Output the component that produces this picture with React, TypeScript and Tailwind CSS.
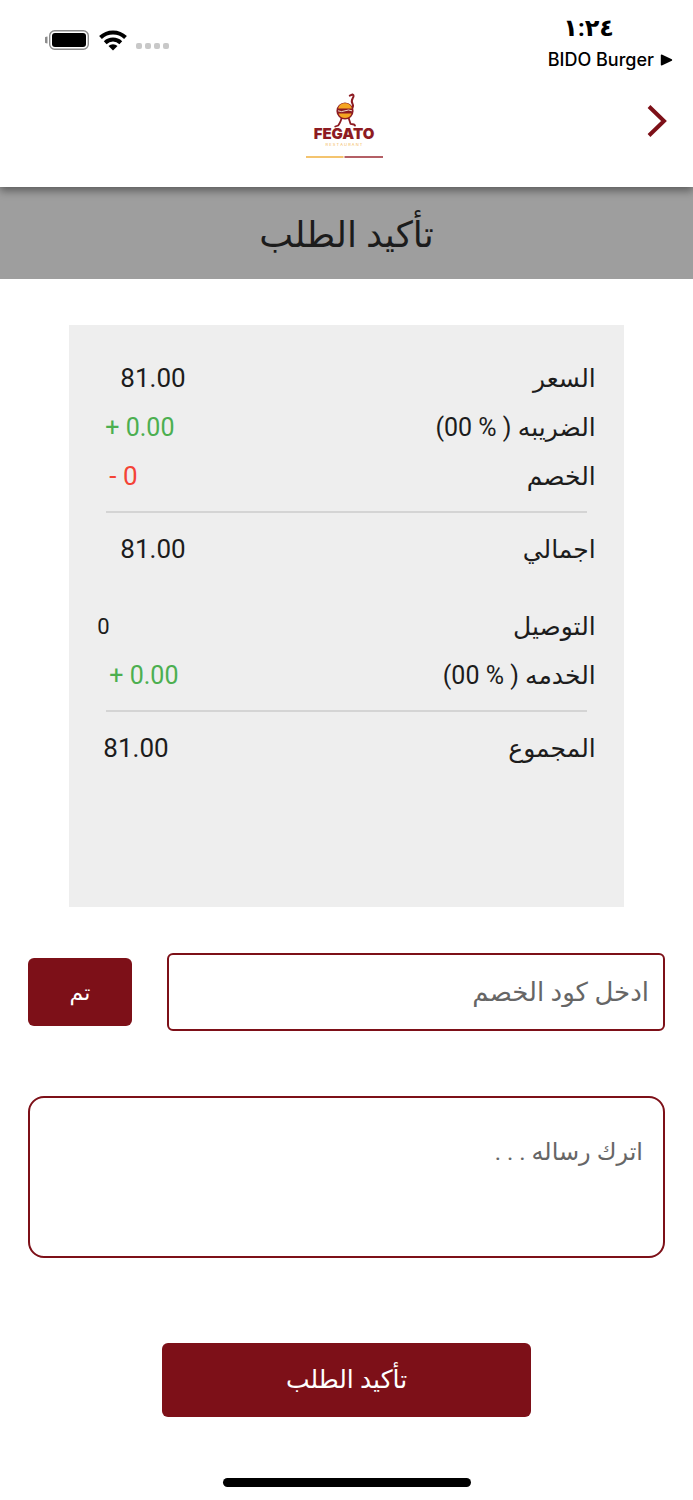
import React, { useState } from 'react';

interface SummaryRow {
  label: string;
  value: string;
  valueClass: string;
}

const SUBTOTAL_ROWS: SummaryRow[] = [
  { label: 'السعر', value: '81.00', valueClass: 'pl-[51px] text-[26px]' },
  { label: 'الضريبه ( % 00)', value: '+ 0.00', valueClass: 'pl-9 text-[25px] text-[#4caf50]' },
  { label: 'الخصم', value: '- 0', valueClass: 'pl-10 text-[26px] text-[#f44336]' },
];

const TOTAL_ROW: SummaryRow[] = [
  { label: 'اجمالي', value: '81.00', valueClass: 'pl-[51px] text-[26px]' },
];

const DELIVERY_ROWS: SummaryRow[] = [
  { label: 'التوصيل', value: '0', valueClass: 'pl-7 text-[22px]' },
  { label: 'الخدمه ( % 00)', value: '+ 0.00', valueClass: 'pl-10 text-[25px] text-[#4caf50]' },
];

const GRAND_TOTAL_ROW: SummaryRow[] = [
  { label: 'المجموع', value: '81.00', valueClass: 'pl-[34px] text-[26px]' },
];

const SummaryList: React.FC<{ rows: SummaryRow[] }> = ({ rows }) => (
  <dl>
    {rows.map((row) => (
      <div key={row.label} className="flex h-[49px] items-center justify-between pr-7">
        <dt className="text-[25px]">{row.label}</dt>
        <dd dir="ltr" className={row.valueClass}>{row.value}</dd>
      </div>
    ))}
  </dl>
);

const Divider: React.FC = () => <hr className="mx-[37px] mt-[10px] mb-3 border-t-2 border-[#d4d4d4]" />;

const StatusBar: React.FC = () => (
  <div dir="ltr" className="flex items-start justify-between pt-3 pr-5 pl-[45px]">
    <div className="flex h-14 items-center gap-[9px]">
      <svg width="45" height="22" viewBox="0 0 45 22" aria-hidden="true">
        <path d="M2.500 7.500a3.500 3.500 0 0 0 0 7z" fill="#8c8c8c" />
        <rect x="4.7" y="1.7" width="38.6" height="18.6" rx="5" fill="none" stroke="#8c8c8c" strokeWidth="1.4" />
        <rect x="7" y="4" width="34" height="14" rx="3" fill="#000" />
      </svg>
      <svg width="28" height="21" viewBox="0 0 28 21" aria-hidden="true" fill="none" stroke="#000" strokeWidth="4">
        <path d="M1.5 7.500a18 18 0 0 1 25 0" />
        <path d="M6.2 12.700a11.2 11.2 0 0 1 15.6 0" />
        <path d="M14 20.500l-4.500-4.500a6.500 6.500 0 0 1 9 0z" fill="#000" stroke="none" />
      </svg>
      <div className="flex gap-[3px] self-end pb-[19px]">
        {[0, 1, 2, 3].map((dot) => (
          <span key={dot} className="h-[6px] w-[6px] rounded-[2px] bg-[#c8c8c8]" />
        ))}
      </div>
    </div>
    <div className="flex flex-col items-end">
      <span className="pr-[59px] text-[24px] leading-8 font-bold">١:٢٤</span>
      <span className="flex items-center gap-[6px] font-['Inter',sans-serif] text-[18px] leading-8 font-medium">
        BIDO Burger
        <svg width="13" height="12" viewBox="0 0 13 12" aria-hidden="true">
          <path d="M1.500 1.200v9.600L11.500 6z" fill="#000" stroke="#000" strokeWidth="1.4" strokeLinejoin="round" />
        </svg>
      </span>
    </div>
  </div>
);

const Logo: React.FC = () => (
  <svg width="78" height="70" viewBox="0 0 78 70" role="img" aria-label="Fegato">
    <g fill="none" stroke="#8d1b22" strokeLinecap="round" strokeLinejoin="round">
      <path d="M43.800 3.600L46.500 2.500c1.600.6 1.200 2.200.2 3.800-1.400 2.400-1.400 3.600-.2 5.500 1.200 2.200.2 4.400-2 6.200" strokeWidth="2" />
      <path d="M35.500 25.500c0 3-1.600 5.500-3.300 8l-3 1" strokeWidth="1.800" />
      <path d="M42.500 25.500l2 6.300 3.500.7 1 1" strokeWidth="1.800" />
    </g>
    <circle cx="39" cy="19" r="8.600" fill="#8d1b22" />
    <path d="M32.200 16.600c1-7 12.600-7 13.600 0z" fill="#f5a623" />
    <path d="M32 18.800q3.500 1.600 7 0t7 0" fill="none" stroke="#f3dccb" strokeWidth="1" />
    <path d="M32.500 21.500h13c-1.800 6-11.200 6-13 0z" fill="#f5a623" />
    <text
      x="38"
      y="47"
      textAnchor="middle"
      className="fill-[#8d1b22] font-['Inter',sans-serif] text-[15px] font-black"
    >
      FEGATO
    </text>
    <text x="38" y="53.500" textAnchor="middle" className="fill-[#f3b95c] font-['Inter',sans-serif] text-[4px]">
      R E S T A U R A N T
    </text>
    <path d="M0 65H37.500" stroke="#f0b03f" strokeWidth="1.600" />
    <path d="M38.500 65h38.500" stroke="#9b2a32" strokeWidth="1.600" />
  </svg>
);

const App: React.FC = () => {
  const [code, setCode] = useState('');
  const [message, setMessage] = useState('');

  return (
    <div dir="rtl" className="min-h-screen bg-white font-['Roboto','DejaVu_Sans',sans-serif] text-[#1c1c1c]">
      <header className="relative z-10 h-[187px] bg-white text-black shadow-[0_4px_8px_rgba(0,0,0,0.4)]">
        <StatusBar />
        <div className="grid grid-cols-3 items-center pt-1 pr-[25px] pl-[22px]">
          <button type="button" aria-label="رجوع" className="justify-self-start">
            <svg width="22" height="34" viewBox="0 0 22 34" aria-hidden="true" fill="none" stroke="#7d1018" strokeWidth="4">
              <path d="M3 2.500L18 17 3 31.500" />
            </svg>
          </button>
          <div className="col-start-2 justify-self-center pt-3">
            <Logo />
          </div>
        </div>
      </header>

      <div className="flex h-[92px] items-center justify-center bg-[#9e9e9e] pt-1">
        <h1 className="text-[36px]">تأكيد الطلب</h1>
      </div>

      <main>
        <section className="mx-auto mt-[46px] w-4/5 bg-[#eeeeee] pt-[29px] pb-[134px]">
          <SummaryList rows={SUBTOTAL_ROWS} />
          <Divider />
          <SummaryList rows={TOTAL_ROW} />
          <div className="h-7" />
          <SummaryList rows={DELIVERY_ROWS} />
          <Divider />
          <SummaryList rows={GRAND_TOTAL_ROW} />
        </section>

        <form className="px-7 pt-[46px]" onSubmit={(e) => e.preventDefault()}>
          <div className="flex items-center gap-[35px]">
            <input
              type="text"
              aria-label="ادخل كود الخصم"
              placeholder="ادخل كود الخصم"
              value={code}
              onChange={(e) => setCode(e.target.value)}
              className="h-[78px] min-w-0 flex-1 rounded-md border-2 border-[#7d1018] px-[14px] text-[26px] placeholder:text-[#666666]"
            />
            <button type="button" className="h-[68px] w-[104px] rounded-md bg-[#7d1018] text-[22px] text-white">
              تم
            </button>
          </div>

          <textarea
            aria-label="اترك رساله"
            placeholder="اترك رساله . . ."
            value={message}
            onChange={(e) => setMessage(e.target.value)}
            className="mt-[65px] block h-[162px] w-full resize-none rounded-2xl border-2 border-[#7d1018] px-5 pt-9 text-[24px] placeholder:text-[#666666]"
          />

          <button
            type="submit"
            className="mx-auto mt-[85px] block h-[74px] w-[58%] rounded-md bg-[#7d1018] text-[25px] text-white"
          >
            تأكيد الطلب
          </button>
        </form>
      </main>

      <div className="mx-auto mt-[61px] mb-[13px] h-[9px] w-[248px] rounded-full bg-black" />
    </div>
  );
};

export default App;
